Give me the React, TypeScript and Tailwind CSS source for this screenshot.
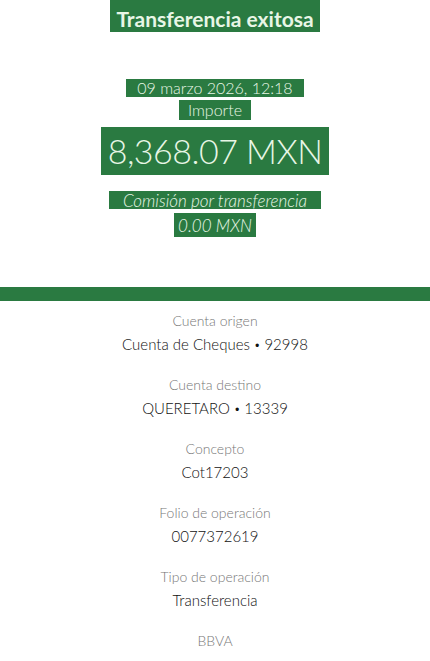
import React from 'react';

const rows = [
  { label: 'Cuenta origen', value: 'Cuenta de Cheques', num: '92998' },
  { label: 'Cuenta destino', value: 'QUERETARO', num: '13339' },
  { label: 'Concepto', value: 'Cot17203' },
  { label: 'Folio de operación', value: '0077372619' },
  { label: 'Tipo de operación', value: 'Transferencia' },
];

export default function App() {
  return (
    <div className="w-[430px] h-[661px] overflow-hidden bg-white font-['Lato','Liberation_Sans',sans-serif]">
      {/* Header */}
      <div className="flex flex-col items-center">
        <div className="h-[32px] w-[210px] bg-[#2a7a41] flex items-end justify-center pb-[3px]">
          <span className="text-[21px] font-bold leading-none text-[#e8f6e6]">Transferencia exitosa</span>
        </div>

        <div className="mt-[47px] h-[18px] w-[178px] bg-[#2a7a41] flex items-center justify-center">
          <span className="text-[16px] font-light leading-none text-[#e8f6e6]">09 marzo 2026, 12:18</span>
        </div>
        <div className="mt-[3px] h-[20px] w-[72px] bg-[#2a7a41] flex items-center justify-center">
          <span className="text-[16px] font-light leading-none text-[#e8f6e6]">Importe</span>
        </div>
        <div className="mt-[7px] h-[48px] w-[228px] bg-[#2a7a41] flex items-center justify-center">
          <span className="text-[34px] font-light leading-none tracking-[-0.5px] text-[#e8f6e6]">8,368.07 MXN</span>
        </div>

        <div className="mt-[16px] h-[18px] w-[212px] bg-[#2a7a41] flex items-center justify-center">
          <span className="text-[17px] font-light italic leading-none text-[#e8f6e6]">Comisión por transferencia</span>
        </div>
        <div className="mt-[4px] h-[24px] w-[82px] bg-[#2a7a41] flex items-center justify-center">
          <span className="text-[17px] font-light italic leading-none text-[#e8f6e6]">0.00 MXN</span>
        </div>
      </div>

      <div className="mt-[50px] h-[14px] bg-[#2a7a41]" />

      {/* Details */}
      <div className="flex flex-col items-center pt-[10px]">
        {rows.map((r) => (
          <div key={r.label} className="flex flex-col items-center h-[64px]">
            <span className="text-[14px] font-light leading-[20px] text-[#777]">{r.label}</span>
            <span className="mt-[3px] text-[15px] font-light leading-[20px] text-[#111]">
              {r.value}
              {r.num && (
                <>
                  {' '}
                  <span className="text-[11px] align-[1px]">•</span> {r.num}
                </>
              )}
            </span>
          </div>
        ))}
        <span className="text-[14px] font-light leading-[20px] text-[#777]">BBVA</span>
      </div>
    </div>
  );
}
